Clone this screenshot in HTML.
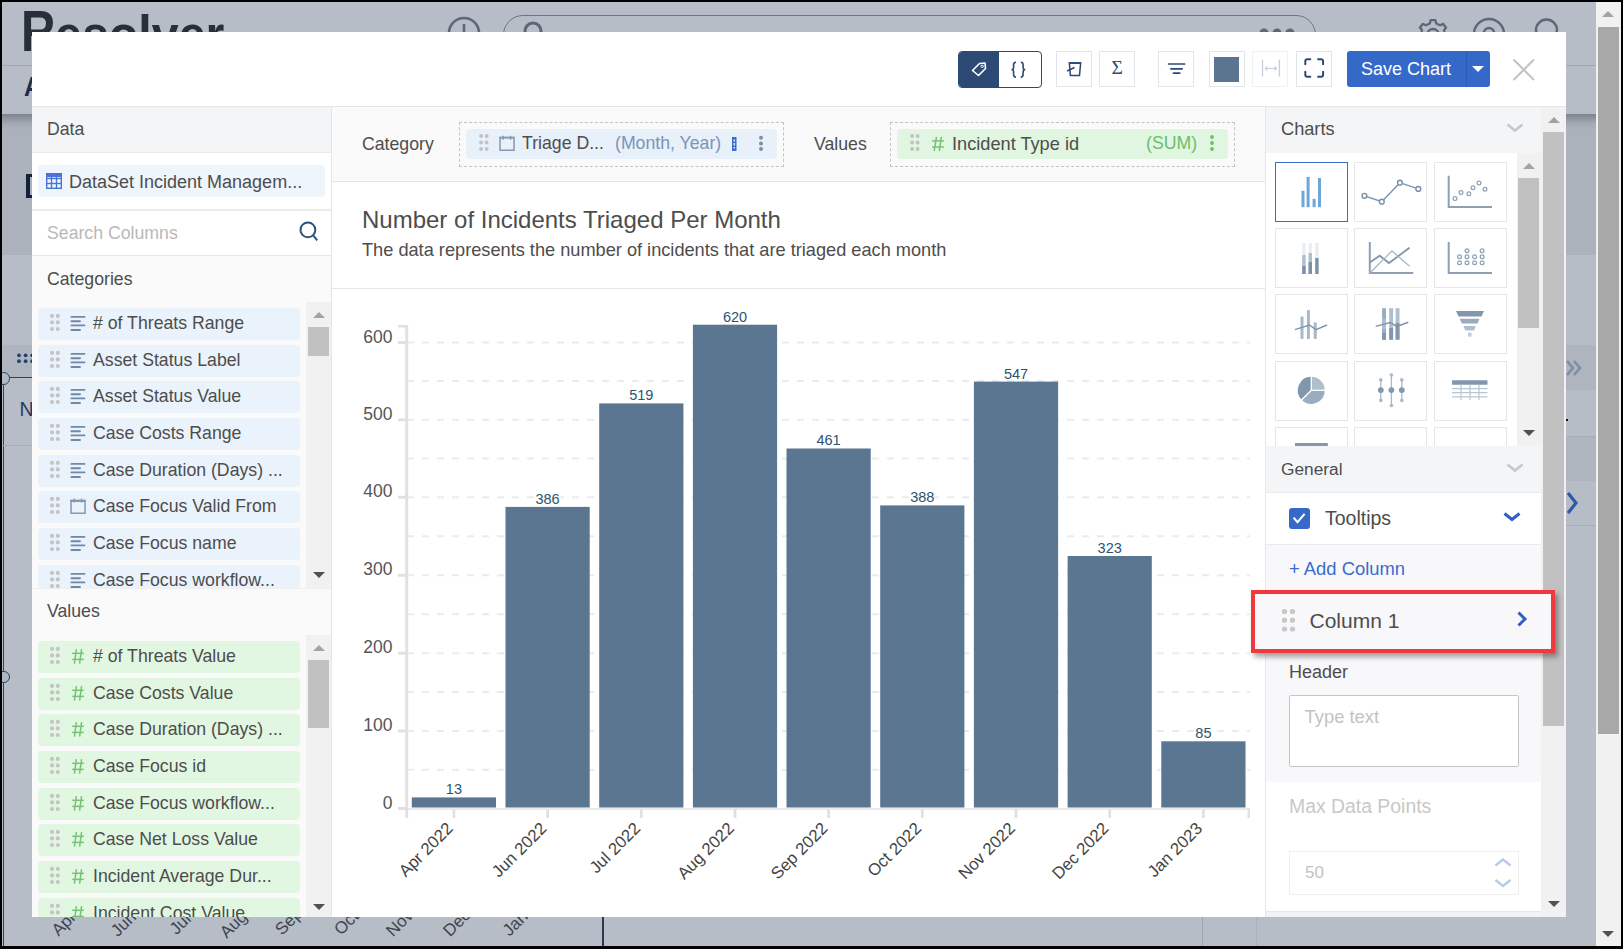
<!DOCTYPE html>
<html><head><meta charset="utf-8">
<style>
*{box-sizing:border-box;margin:0;padding:0}
html,body{width:1623px;height:949px;overflow:hidden;background:#b7bdc7;font-family:"Liberation Sans",sans-serif;position:relative}
.a{position:absolute}
.t{position:absolute;white-space:nowrap;line-height:1}
#modal{position:absolute;left:32px;top:32px;width:1534px;height:885px;background:#fff;overflow:hidden}
.sb{position:absolute;background:#f1f1f1}
.sbt{position:absolute;background:#c1c1c1}
.aru{position:absolute;width:0;height:0;border-left:6px solid transparent;border-right:6px solid transparent;border-bottom:6px solid #a3a3a3}
.ard{position:absolute;width:0;height:0;border-left:6px solid transparent;border-right:6px solid transparent;border-top:6px solid #505050}
</style></head>
<body>
<!-- background page -->
<div class="a" style="left:0;top:0;width:1623px;height:66px;background:#b7bdc7;border-bottom:1px solid #9ea6b1"></div>
<div class="t" style="left:20.5px;top:4px;font-size:56.7px;font-weight:bold;color:#282f39;transform:scaleX(0.845);transform-origin:0 0">R</div><div class="t" style="left:55px;top:8px;font-size:52px;font-weight:bold;color:#282f39;transform:scaleX(0.93);transform-origin:0 0">esolver</div>
<svg class="a" style="left:440px;top:10px" width="50" height="50"><circle cx="24" cy="23" r="15" fill="none" stroke="#5b6877" stroke-width="2.6"/><line x1="24" y1="14" x2="24" y2="24" stroke="#5b6877" stroke-width="2.6"/></svg>
<div class="a" style="left:503px;top:15px;width:813px;height:40px;border:1.2px solid #6b7684;border-radius:20px"></div>
<svg class="a" style="left:515px;top:14px" width="40" height="30"><circle cx="18" cy="17" r="8" fill="none" stroke="#5b6877" stroke-width="3.2"/></svg>
<svg class="a" style="left:1255px;top:22px" width="45" height="14"><circle cx="9" cy="11" r="4.5" fill="#5b6877"/><circle cx="22" cy="11" r="4.5" fill="#5b6877"/><circle cx="35" cy="11" r="4.5" fill="#5b6877"/></svg>
<svg class="a" style="left:1412px;top:12px" width="44" height="44"><path d="M17.81 11.43 L18.72 8.17 L23.28 8.17 L24.19 11.43 L28.05 13.29 L31.17 11.97 L34.01 15.54 L32.03 18.28 L32.99 22.46 L35.96 24.08 L34.95 28.52 L31.57 28.69 L28.90 32.04 L29.49 35.37 L25.38 37.35 L23.14 34.81 L18.86 34.81 L16.62 37.35 L12.51 35.37 L13.10 32.04 L10.43 28.69 L7.05 28.52 L6.04 24.08 L9.01 22.46 L9.97 18.28 L7.99 15.54 L10.83 11.97 L13.95 13.29 Z" fill="none" stroke="#5b6877" stroke-width="2.3" stroke-linejoin="miter"/><circle cx="21" cy="23" r="6" fill="none" stroke="#5b6877" stroke-width="2.3"/></svg>
<svg class="a" style="left:1468px;top:12px" width="44" height="44"><circle cx="21" cy="22" r="15" fill="none" stroke="#5b6877" stroke-width="2.4"/><path d="M16 21a5 5 0 1 1 10 0" fill="none" stroke="#5b6877" stroke-width="2.4"/></svg>
<svg class="a" style="left:1530px;top:12px" width="36" height="36"><circle cx="16.5" cy="18" r="10.5" fill="none" stroke="#5b6877" stroke-width="2.4"/></svg>
<div class="t" style="left:23.5px;top:74px;font-size:27px;font-weight:bold;color:#1d2c44;transform:scaleX(0.9);transform-origin:0 0;-webkit-text-stroke:0px">A</div>
<div class="a" style="left:0;top:114px;width:1623px;height:141px;background:#abb2bc"></div>
<div class="a" style="left:0;top:114px;width:1623px;height:16px;background:linear-gradient(#7c848e,#a3aab4 60%,#abb2bc)"></div>
<div class="a" style="left:25.5px;top:174px;width:8px;height:23.5px;border:3px solid #13223a;border-left-width:4px;border-right:none"></div>
<div class="a" style="left:0;top:345px;width:1623px;height:32px;background:#aeb5bf"></div>
<svg class="a" style="left:14px;top:350px" width="22" height="16"><g fill="#26406a"><circle cx="5" cy="5.3" r="1.9"/><circle cx="11.6" cy="5.3" r="1.9"/><circle cx="18.2" cy="5.3" r="1.9"/><circle cx="5" cy="11.2" r="1.9"/><circle cx="11.6" cy="11.2" r="1.9"/><circle cx="18.2" cy="11.2" r="1.9"/></g></svg>
<div class="a" style="left:5px;top:376.5px;width:30px;height:1.3px;background:#2b4366"></div>
<div class="a" style="left:2.5px;top:377px;width:1.3px;height:570px;background:#2b4366"></div>
<div class="a" style="left:-3px;top:372px;width:12.5px;height:12.5px;border-radius:50%;border:1.3px solid #2b4366;background:#afb7c2"></div>
<div class="a" style="left:-3px;top:670.5px;width:12.5px;height:12.5px;border-radius:50%;border:1.3px solid #2b4366;background:#afb7c2"></div>
<div class="t" style="left:19.5px;top:399.5px;font-size:19.5px;color:#1d3a5c">N</div>
<div class="a" style="left:0;top:445px;width:1623px;height:1px;background:#a6adb8"></div>
<!-- right side of background -->
<div class="a" style="left:1566px;top:345px;width:30px;height:45px;background:#aeb5bf"></div>
<div class="a" style="left:1566px;top:436px;width:30px;height:45px;background:#aeb5bf"></div>
<div class="a" style="left:1566px;top:436px;width:30px;height:1px;background:#a6adb8"></div>
<div class="a" style="left:1566px;top:525px;width:30px;height:1px;background:#a6adb8"></div>
<svg class="a" style="left:1565px;top:358px" width="20" height="20"><path d="M2 3l6 7-6 7M9 3l6 7-6 7" fill="none" stroke="#7d8ea6" stroke-width="2.6"/></svg>
<div class="a" style="left:1566px;top:419px;width:2px;height:2px;background:#111"></div>
<svg class="a" style="left:1564px;top:490px" width="16" height="26"><path d="M4 3l8 10-8 10" fill="none" stroke="#2f57ac" stroke-width="3.2"/></svg>
<!-- bottom labels bg -->
<div class="a" style="left:602px;top:915px;width:1.5px;height:32px;background:#2b3a50"></div>
<div class="a" style="left:1202.3px;top:917px;width:1.2px;height:30px;background:#9ea6b1"></div><div class="a" style="left:1256px;top:917px;width:1px;height:30px;background:#a9b0ba"></div>
<svg class="a" style="left:0;top:880px" width="700" height="69" viewBox="0 880 700 69"><text transform="translate(58.4,936.7) rotate(-45)" font-size="17" fill="#3d4552" font-family="Liberation Sans">Apr 2022</text><text transform="translate(117.7,937.5) rotate(-45)" font-size="17" fill="#3d4552" font-family="Liberation Sans">Jun 2022</text><text transform="translate(176.5,935.5) rotate(-45)" font-size="17" fill="#3d4552" font-family="Liberation Sans">Jul 2022</text><text transform="translate(226.7,939.1) rotate(-45)" font-size="17" fill="#3d4552" font-family="Liberation Sans">Aug 2022</text><text transform="translate(282.0,935.9) rotate(-45)" font-size="17" fill="#3d4552" font-family="Liberation Sans">Sep 2022</text><text transform="translate(341.0,936.0) rotate(-45)" font-size="17" fill="#3d4552" font-family="Liberation Sans">Oct 2022</text><text transform="translate(393.0,937.5) rotate(-45)" font-size="17" fill="#3d4552" font-family="Liberation Sans">Nov 2022</text><text transform="translate(450.0,937.5) rotate(-45)" font-size="17" fill="#3d4552" font-family="Liberation Sans">Dec 2022</text><text transform="translate(509.5,937.0) rotate(-45)" font-size="17" fill="#3d4552" font-family="Liberation Sans">Jan 2023</text></svg>
<!-- outer scrollbar -->
<div class="sb" style="left:1596px;top:0;width:25px;height:949px"></div>
<div class="a" style="left:1598px;top:27px;width:21px;height:707px;background:#a8a8a8"></div>
<div class="aru" style="left:1602px;top:11px;border-bottom-color:#a3a3a3"></div>
<div class="ard" style="left:1602px;top:931px"></div>


<!-- modal -->
<div id="modal"></div>
<div class="a" style="left:32px;top:106px;width:1534px;height:1px;background:#e4e6e9"></div>
<!-- left panel -->
<div id="lp" class="a" style="left:32px;top:107px;width:299px;height:810px;background:#fafafa;overflow:hidden">
  <div class="a" style="left:0;top:0;width:299px;height:46px;background:#f4f5f7;border-bottom:1px solid #e8e9eb"></div>
  <div class="t" style="left:15px;top:14px;font-size:17.7px;color:#4d4d4d">Data</div>
  <div class="a" style="left:0;top:46px;width:299px;height:56px;background:#fff"></div>
  <div class="a" style="left:6px;top:58px;width:287px;height:32px;background:#eff5fc;border-radius:4px"></div>
  <svg class="a" style="left:14px;top:66px" width="16" height="16"><g fill="none" stroke="#4a73d6" stroke-width="1.4"><rect x="0.7" y="0.7" width="14.6" height="14.6"/><line x1="0" y1="5.5" x2="16" y2="5.5"/><line x1="0" y1="10.5" x2="16" y2="10.5"/><line x1="5.5" y1="3" x2="5.5" y2="16"/><line x1="10.5" y1="3" x2="10.5" y2="16"/></g><rect x="0" y="0" width="16" height="4" fill="#4a73d6"/></svg>
  <div class="t" style="left:37px;top:66px;font-size:18px;color:#4d4d4d">DataSet Incident Managem...</div>
  <div class="a" style="left:0;top:102px;width:299px;height:2px;background:#ebebeb"></div>
  <div class="a" style="left:0;top:104px;width:299px;height:45px;background:#fff;border-bottom:1px solid #e6e6e6"></div>
  <div class="t" style="left:15px;top:118px;font-size:17.7px;color:#b9b9b9">Search Columns</div>
  <svg class="a" style="left:266px;top:114px" width="22" height="22"><circle cx="9.9" cy="8.9" r="7.4" fill="none" stroke="#2d4f7f" stroke-width="2"/><line x1="15" y1="14.2" x2="19.2" y2="19.4" stroke="#2d4f7f" stroke-width="2"/></svg>
  <div class="t" style="left:15px;top:164px;font-size:17.7px;color:#4d4d4d">Categories</div>
  <div id="catlist" class="a" style="left:0;top:195px;width:299px;height:286px;overflow:hidden"><div class="a" style="left:6px;top:6.00px;width:262px;height:32px;background:#eaf2fb;border-radius:4px"><svg class="a" style="left:11px;top:5px" width="14" height="20"><g fill="#c4c4c4"><circle cx="3.05" cy="2.9" r="2.05"/><circle cx="8.8" cy="2.9" r="2.05"/><circle cx="3.05" cy="9.4" r="2.05"/><circle cx="8.8" cy="9.4" r="2.05"/><circle cx="3.05" cy="16" r="2.05"/><circle cx="8.8" cy="16" r="2.05"/></g></svg><svg class="a" style="left:31px;top:7px" width="18" height="17"><g stroke="#7189a8" stroke-width="1.9" stroke-linecap="round"><line x1="2.4" y1="1.9" x2="15.4" y2="1.9"/><line x1="2.4" y1="6.2" x2="11" y2="6.2"/><line x1="2.4" y1="10.4" x2="15.4" y2="10.4"/><line x1="2.4" y1="15" x2="11" y2="15"/></g></svg><div class="t" style="left:55px;top:7px;font-size:17.7px;color:#4d4d4d"># of Threats Range</div></div><div class="a" style="left:6px;top:42.67px;width:262px;height:32px;background:#eaf2fb;border-radius:4px"><svg class="a" style="left:11px;top:5px" width="14" height="20"><g fill="#c4c4c4"><circle cx="3.05" cy="2.9" r="2.05"/><circle cx="8.8" cy="2.9" r="2.05"/><circle cx="3.05" cy="9.4" r="2.05"/><circle cx="8.8" cy="9.4" r="2.05"/><circle cx="3.05" cy="16" r="2.05"/><circle cx="8.8" cy="16" r="2.05"/></g></svg><svg class="a" style="left:31px;top:7px" width="18" height="17"><g stroke="#7189a8" stroke-width="1.9" stroke-linecap="round"><line x1="2.4" y1="1.9" x2="15.4" y2="1.9"/><line x1="2.4" y1="6.2" x2="11" y2="6.2"/><line x1="2.4" y1="10.4" x2="15.4" y2="10.4"/><line x1="2.4" y1="15" x2="11" y2="15"/></g></svg><div class="t" style="left:55px;top:7px;font-size:17.7px;color:#4d4d4d">Asset Status Label</div></div><div class="a" style="left:6px;top:79.34px;width:262px;height:32px;background:#eaf2fb;border-radius:4px"><svg class="a" style="left:11px;top:5px" width="14" height="20"><g fill="#c4c4c4"><circle cx="3.05" cy="2.9" r="2.05"/><circle cx="8.8" cy="2.9" r="2.05"/><circle cx="3.05" cy="9.4" r="2.05"/><circle cx="8.8" cy="9.4" r="2.05"/><circle cx="3.05" cy="16" r="2.05"/><circle cx="8.8" cy="16" r="2.05"/></g></svg><svg class="a" style="left:31px;top:7px" width="18" height="17"><g stroke="#7189a8" stroke-width="1.9" stroke-linecap="round"><line x1="2.4" y1="1.9" x2="15.4" y2="1.9"/><line x1="2.4" y1="6.2" x2="11" y2="6.2"/><line x1="2.4" y1="10.4" x2="15.4" y2="10.4"/><line x1="2.4" y1="15" x2="11" y2="15"/></g></svg><div class="t" style="left:55px;top:7px;font-size:17.7px;color:#4d4d4d">Asset Status Value</div></div><div class="a" style="left:6px;top:116.01px;width:262px;height:32px;background:#eaf2fb;border-radius:4px"><svg class="a" style="left:11px;top:5px" width="14" height="20"><g fill="#c4c4c4"><circle cx="3.05" cy="2.9" r="2.05"/><circle cx="8.8" cy="2.9" r="2.05"/><circle cx="3.05" cy="9.4" r="2.05"/><circle cx="8.8" cy="9.4" r="2.05"/><circle cx="3.05" cy="16" r="2.05"/><circle cx="8.8" cy="16" r="2.05"/></g></svg><svg class="a" style="left:31px;top:7px" width="18" height="17"><g stroke="#7189a8" stroke-width="1.9" stroke-linecap="round"><line x1="2.4" y1="1.9" x2="15.4" y2="1.9"/><line x1="2.4" y1="6.2" x2="11" y2="6.2"/><line x1="2.4" y1="10.4" x2="15.4" y2="10.4"/><line x1="2.4" y1="15" x2="11" y2="15"/></g></svg><div class="t" style="left:55px;top:7px;font-size:17.7px;color:#4d4d4d">Case Costs Range</div></div><div class="a" style="left:6px;top:152.68px;width:262px;height:32px;background:#eaf2fb;border-radius:4px"><svg class="a" style="left:11px;top:5px" width="14" height="20"><g fill="#c4c4c4"><circle cx="3.05" cy="2.9" r="2.05"/><circle cx="8.8" cy="2.9" r="2.05"/><circle cx="3.05" cy="9.4" r="2.05"/><circle cx="8.8" cy="9.4" r="2.05"/><circle cx="3.05" cy="16" r="2.05"/><circle cx="8.8" cy="16" r="2.05"/></g></svg><svg class="a" style="left:31px;top:7px" width="18" height="17"><g stroke="#7189a8" stroke-width="1.9" stroke-linecap="round"><line x1="2.4" y1="1.9" x2="15.4" y2="1.9"/><line x1="2.4" y1="6.2" x2="11" y2="6.2"/><line x1="2.4" y1="10.4" x2="15.4" y2="10.4"/><line x1="2.4" y1="15" x2="11" y2="15"/></g></svg><div class="t" style="left:55px;top:7px;font-size:17.7px;color:#4d4d4d">Case Duration (Days) ...</div></div><div class="a" style="left:6px;top:189.35px;width:262px;height:32px;background:#eaf2fb;border-radius:4px"><svg class="a" style="left:11px;top:5px" width="14" height="20"><g fill="#c4c4c4"><circle cx="3.05" cy="2.9" r="2.05"/><circle cx="8.8" cy="2.9" r="2.05"/><circle cx="3.05" cy="9.4" r="2.05"/><circle cx="8.8" cy="9.4" r="2.05"/><circle cx="3.05" cy="16" r="2.05"/><circle cx="8.8" cy="16" r="2.05"/></g></svg><svg class="a" style="left:31px;top:7px" width="18" height="18"><g fill="none" stroke="#8499b4" stroke-width="1.5"><rect x="2.05" y="2.55" width="14" height="12.7"/></g><rect x="1.3" y="1.8" width="15.5" height="2.2" fill="#8499b4"/><line x1="5.2" y1="0.5" x2="5.2" y2="4.5" stroke="#8499b4" stroke-width="1.4"/><line x1="12.6" y1="0.5" x2="12.6" y2="4.5" stroke="#8499b4" stroke-width="1.4"/></svg><div class="t" style="left:55px;top:7px;font-size:17.7px;color:#4d4d4d">Case Focus Valid From</div></div><div class="a" style="left:6px;top:226.02px;width:262px;height:32px;background:#eaf2fb;border-radius:4px"><svg class="a" style="left:11px;top:5px" width="14" height="20"><g fill="#c4c4c4"><circle cx="3.05" cy="2.9" r="2.05"/><circle cx="8.8" cy="2.9" r="2.05"/><circle cx="3.05" cy="9.4" r="2.05"/><circle cx="8.8" cy="9.4" r="2.05"/><circle cx="3.05" cy="16" r="2.05"/><circle cx="8.8" cy="16" r="2.05"/></g></svg><svg class="a" style="left:31px;top:7px" width="18" height="17"><g stroke="#7189a8" stroke-width="1.9" stroke-linecap="round"><line x1="2.4" y1="1.9" x2="15.4" y2="1.9"/><line x1="2.4" y1="6.2" x2="11" y2="6.2"/><line x1="2.4" y1="10.4" x2="15.4" y2="10.4"/><line x1="2.4" y1="15" x2="11" y2="15"/></g></svg><div class="t" style="left:55px;top:7px;font-size:17.7px;color:#4d4d4d">Case Focus name</div></div><div class="a" style="left:6px;top:262.69px;width:262px;height:32px;background:#eaf2fb;border-radius:4px"><svg class="a" style="left:11px;top:5px" width="14" height="20"><g fill="#c4c4c4"><circle cx="3.05" cy="2.9" r="2.05"/><circle cx="8.8" cy="2.9" r="2.05"/><circle cx="3.05" cy="9.4" r="2.05"/><circle cx="8.8" cy="9.4" r="2.05"/><circle cx="3.05" cy="16" r="2.05"/><circle cx="8.8" cy="16" r="2.05"/></g></svg><svg class="a" style="left:31px;top:7px" width="18" height="17"><g stroke="#7189a8" stroke-width="1.9" stroke-linecap="round"><line x1="2.4" y1="1.9" x2="15.4" y2="1.9"/><line x1="2.4" y1="6.2" x2="11" y2="6.2"/><line x1="2.4" y1="10.4" x2="15.4" y2="10.4"/><line x1="2.4" y1="15" x2="11" y2="15"/></g></svg><div class="t" style="left:55px;top:7px;font-size:17.7px;color:#4d4d4d">Case Focus workflow...</div></div></div>
  <div class="sb" style="left:274px;top:195px;width:25px;height:286px"></div>
  <div class="sbt" style="left:276px;top:220px;width:21px;height:29px"></div>
  <div class="aru" style="left:280.5px;top:205px"></div>
  <div class="ard" style="left:280.5px;top:465px"></div>
  <div class="a" style="left:0;top:481px;width:299px;height:1px;background:#efefef"></div>
  <div class="t" style="left:15px;top:496px;font-size:17.7px;color:#4d4d4d">Values</div>
  <div id="vallist" class="a" style="left:0;top:528px;width:299px;height:282px;overflow:hidden"><div class="a" style="left:6px;top:6.00px;width:262px;height:32px;background:#e2f7e2;border-radius:4px"><svg class="a" style="left:11px;top:5px" width="14" height="20"><g fill="#c4c4c4"><circle cx="3.05" cy="2.9" r="2.05"/><circle cx="8.8" cy="2.9" r="2.05"/><circle cx="3.05" cy="9.4" r="2.05"/><circle cx="8.8" cy="9.4" r="2.05"/><circle cx="3.05" cy="16" r="2.05"/><circle cx="8.8" cy="16" r="2.05"/></g></svg><svg class="a" style="left:33px;top:7px" width="14" height="17"><g stroke="#76c276" stroke-width="1.5" fill="none"><line x1="5.4" y1="1.2" x2="3.4" y2="15.7"/><line x1="10.6" y1="1.2" x2="8.6" y2="15.7"/><line x1="1.2" y1="5.3" x2="12.8" y2="5.3"/><line x1="1.2" y1="11.4" x2="12.8" y2="11.4"/></g></svg><div class="t" style="left:55px;top:7px;font-size:17.7px;color:#4d4d4d"># of Threats Value</div></div><div class="a" style="left:6px;top:42.67px;width:262px;height:32px;background:#e2f7e2;border-radius:4px"><svg class="a" style="left:11px;top:5px" width="14" height="20"><g fill="#c4c4c4"><circle cx="3.05" cy="2.9" r="2.05"/><circle cx="8.8" cy="2.9" r="2.05"/><circle cx="3.05" cy="9.4" r="2.05"/><circle cx="8.8" cy="9.4" r="2.05"/><circle cx="3.05" cy="16" r="2.05"/><circle cx="8.8" cy="16" r="2.05"/></g></svg><svg class="a" style="left:33px;top:7px" width="14" height="17"><g stroke="#76c276" stroke-width="1.5" fill="none"><line x1="5.4" y1="1.2" x2="3.4" y2="15.7"/><line x1="10.6" y1="1.2" x2="8.6" y2="15.7"/><line x1="1.2" y1="5.3" x2="12.8" y2="5.3"/><line x1="1.2" y1="11.4" x2="12.8" y2="11.4"/></g></svg><div class="t" style="left:55px;top:7px;font-size:17.7px;color:#4d4d4d">Case Costs Value</div></div><div class="a" style="left:6px;top:79.34px;width:262px;height:32px;background:#e2f7e2;border-radius:4px"><svg class="a" style="left:11px;top:5px" width="14" height="20"><g fill="#c4c4c4"><circle cx="3.05" cy="2.9" r="2.05"/><circle cx="8.8" cy="2.9" r="2.05"/><circle cx="3.05" cy="9.4" r="2.05"/><circle cx="8.8" cy="9.4" r="2.05"/><circle cx="3.05" cy="16" r="2.05"/><circle cx="8.8" cy="16" r="2.05"/></g></svg><svg class="a" style="left:33px;top:7px" width="14" height="17"><g stroke="#76c276" stroke-width="1.5" fill="none"><line x1="5.4" y1="1.2" x2="3.4" y2="15.7"/><line x1="10.6" y1="1.2" x2="8.6" y2="15.7"/><line x1="1.2" y1="5.3" x2="12.8" y2="5.3"/><line x1="1.2" y1="11.4" x2="12.8" y2="11.4"/></g></svg><div class="t" style="left:55px;top:7px;font-size:17.7px;color:#4d4d4d">Case Duration (Days) ...</div></div><div class="a" style="left:6px;top:116.01px;width:262px;height:32px;background:#e2f7e2;border-radius:4px"><svg class="a" style="left:11px;top:5px" width="14" height="20"><g fill="#c4c4c4"><circle cx="3.05" cy="2.9" r="2.05"/><circle cx="8.8" cy="2.9" r="2.05"/><circle cx="3.05" cy="9.4" r="2.05"/><circle cx="8.8" cy="9.4" r="2.05"/><circle cx="3.05" cy="16" r="2.05"/><circle cx="8.8" cy="16" r="2.05"/></g></svg><svg class="a" style="left:33px;top:7px" width="14" height="17"><g stroke="#76c276" stroke-width="1.5" fill="none"><line x1="5.4" y1="1.2" x2="3.4" y2="15.7"/><line x1="10.6" y1="1.2" x2="8.6" y2="15.7"/><line x1="1.2" y1="5.3" x2="12.8" y2="5.3"/><line x1="1.2" y1="11.4" x2="12.8" y2="11.4"/></g></svg><div class="t" style="left:55px;top:7px;font-size:17.7px;color:#4d4d4d">Case Focus id</div></div><div class="a" style="left:6px;top:152.68px;width:262px;height:32px;background:#e2f7e2;border-radius:4px"><svg class="a" style="left:11px;top:5px" width="14" height="20"><g fill="#c4c4c4"><circle cx="3.05" cy="2.9" r="2.05"/><circle cx="8.8" cy="2.9" r="2.05"/><circle cx="3.05" cy="9.4" r="2.05"/><circle cx="8.8" cy="9.4" r="2.05"/><circle cx="3.05" cy="16" r="2.05"/><circle cx="8.8" cy="16" r="2.05"/></g></svg><svg class="a" style="left:33px;top:7px" width="14" height="17"><g stroke="#76c276" stroke-width="1.5" fill="none"><line x1="5.4" y1="1.2" x2="3.4" y2="15.7"/><line x1="10.6" y1="1.2" x2="8.6" y2="15.7"/><line x1="1.2" y1="5.3" x2="12.8" y2="5.3"/><line x1="1.2" y1="11.4" x2="12.8" y2="11.4"/></g></svg><div class="t" style="left:55px;top:7px;font-size:17.7px;color:#4d4d4d">Case Focus workflow...</div></div><div class="a" style="left:6px;top:189.35px;width:262px;height:32px;background:#e2f7e2;border-radius:4px"><svg class="a" style="left:11px;top:5px" width="14" height="20"><g fill="#c4c4c4"><circle cx="3.05" cy="2.9" r="2.05"/><circle cx="8.8" cy="2.9" r="2.05"/><circle cx="3.05" cy="9.4" r="2.05"/><circle cx="8.8" cy="9.4" r="2.05"/><circle cx="3.05" cy="16" r="2.05"/><circle cx="8.8" cy="16" r="2.05"/></g></svg><svg class="a" style="left:33px;top:7px" width="14" height="17"><g stroke="#76c276" stroke-width="1.5" fill="none"><line x1="5.4" y1="1.2" x2="3.4" y2="15.7"/><line x1="10.6" y1="1.2" x2="8.6" y2="15.7"/><line x1="1.2" y1="5.3" x2="12.8" y2="5.3"/><line x1="1.2" y1="11.4" x2="12.8" y2="11.4"/></g></svg><div class="t" style="left:55px;top:7px;font-size:17.7px;color:#4d4d4d">Case Net Loss Value</div></div><div class="a" style="left:6px;top:226.02px;width:262px;height:32px;background:#e2f7e2;border-radius:4px"><svg class="a" style="left:11px;top:5px" width="14" height="20"><g fill="#c4c4c4"><circle cx="3.05" cy="2.9" r="2.05"/><circle cx="8.8" cy="2.9" r="2.05"/><circle cx="3.05" cy="9.4" r="2.05"/><circle cx="8.8" cy="9.4" r="2.05"/><circle cx="3.05" cy="16" r="2.05"/><circle cx="8.8" cy="16" r="2.05"/></g></svg><svg class="a" style="left:33px;top:7px" width="14" height="17"><g stroke="#76c276" stroke-width="1.5" fill="none"><line x1="5.4" y1="1.2" x2="3.4" y2="15.7"/><line x1="10.6" y1="1.2" x2="8.6" y2="15.7"/><line x1="1.2" y1="5.3" x2="12.8" y2="5.3"/><line x1="1.2" y1="11.4" x2="12.8" y2="11.4"/></g></svg><div class="t" style="left:55px;top:7px;font-size:17.7px;color:#4d4d4d">Incident Average Dur...</div></div><div class="a" style="left:6px;top:262.69px;width:262px;height:32px;background:#e2f7e2;border-radius:4px"><svg class="a" style="left:11px;top:5px" width="14" height="20"><g fill="#c4c4c4"><circle cx="3.05" cy="2.9" r="2.05"/><circle cx="8.8" cy="2.9" r="2.05"/><circle cx="3.05" cy="9.4" r="2.05"/><circle cx="8.8" cy="9.4" r="2.05"/><circle cx="3.05" cy="16" r="2.05"/><circle cx="8.8" cy="16" r="2.05"/></g></svg><svg class="a" style="left:33px;top:7px" width="14" height="17"><g stroke="#76c276" stroke-width="1.5" fill="none"><line x1="5.4" y1="1.2" x2="3.4" y2="15.7"/><line x1="10.6" y1="1.2" x2="8.6" y2="15.7"/><line x1="1.2" y1="5.3" x2="12.8" y2="5.3"/><line x1="1.2" y1="11.4" x2="12.8" y2="11.4"/></g></svg><div class="t" style="left:55px;top:7px;font-size:17.7px;color:#4d4d4d">Incident Cost Value</div></div></div>
  <div class="sb" style="left:274px;top:528px;width:25px;height:282px"></div>
  <div class="sbt" style="left:276px;top:553px;width:21px;height:68px"></div>
  <div class="aru" style="left:280.5px;top:538px"></div>
  <div class="ard" style="left:280.5px;top:797px"></div>
</div>
<div class="a" style="left:331px;top:107px;width:1px;height:810px;background:#e6e6e6"></div>

<!-- header toolbar -->
<div class="a" style="left:958px;top:51px;width:84px;height:37px;border:1.5px solid #2c4a74;border-radius:4px;overflow:hidden;background:#fff">
  <div class="a" style="left:0;top:0;width:40px;height:37px;background:#2c4a74"></div>
</div>
<svg class="a" style="left:969px;top:60px" width="20" height="20"><path d="M3.5 10.5 L10.5 3.5 L16 3 L16.5 8.5 L9.5 15.5 Z" fill="none" stroke="#fff" stroke-width="1.6" stroke-linejoin="round"/><circle cx="13.2" cy="6.3" r="1.2" fill="none" stroke="#fff" stroke-width="1"/></svg>
<svg class="a" style="left:1008px;top:60px" width="20" height="20"><g fill="none" stroke="#2c4a74" stroke-width="1.6"><path d="M8 2.2C6.3 2.2 5.6 3 5.6 4.8L5.6 7.6C5.6 9 4.9 9.7 3.5 9.7C4.9 9.7 5.6 10.4 5.6 11.8L5.6 14.6C5.6 16.4 6.3 17.2 8 17.2"/><path d="M12.7 2.2C14.4 2.2 15.1 3 15.1 4.8L15.1 7.6C15.1 9 15.8 9.7 17.2 9.7C15.8 9.7 15.1 10.4 15.1 11.8L15.1 14.6C15.1 16.4 14.4 17.2 12.7 17.2"/></g></svg>
<div class="a" style="left:1056px;top:51px;width:36px;height:36px;border:1px solid #e1e6ed"></div>
<svg class="a" style="left:1063px;top:58px" width="22" height="22"><path d="M6.4 5.3 L17.6 5.3 L16.5 17.4 L7.4 17.4 Z" fill="none" stroke="#2c4a74" stroke-width="1.5"/><line x1="5.6" y1="4.6" x2="18.4" y2="4.6" stroke="#2c4a74" stroke-width="1"/><path d="M4.1 13 L11.5 9.5" fill="none" stroke="#2c4a74" stroke-width="1.5"/></svg>
<div class="a" style="left:1099px;top:51px;width:36px;height:36px;border:1px solid #e1e6ed"></div>
<div class="t" style="left:1111.5px;top:58px;font-size:19.5px;color:#2c4a74;font-family:'Liberation Serif',serif">&Sigma;</div>
<div class="a" style="left:1158px;top:51px;width:36px;height:36px;border:1px solid #e1e6ed"></div>
<svg class="a" style="left:1165px;top:58px" width="22" height="22"><g stroke="#2c4a74" stroke-width="1.7" stroke-linecap="round"><line x1="3.6" y1="6" x2="19.6" y2="6"/><line x1="5.9" y1="10.8" x2="17.2" y2="10.8"/><line x1="8.4" y1="15.1" x2="14.8" y2="15.1"/></g></svg>
<div class="a" style="left:1209px;top:51px;width:36px;height:36px;border:1px solid #e1e6ed"></div>
<div class="a" style="left:1214px;top:57px;width:25px;height:25px;background:#5b7590"></div>
<div class="a" style="left:1252px;top:51px;width:36px;height:36px;border:1px solid #eef1f5"></div>
<svg class="a" style="left:1259px;top:58px" width="24" height="22"><g stroke="#c5cfdb" stroke-width="1.3" fill="none"><line x1="3.5" y1="1.6" x2="3.5" y2="18.6"/><line x1="20.4" y1="1.6" x2="20.4" y2="18.6"/><line x1="6.3" y1="10.4" x2="17.6" y2="10.4" stroke-width="1.1"/><path d="M8.3 8.3l-2 2.1 2 2.1M15.6 8.3l2 2.1-2 2.1" stroke-width="1.1"/></g></svg>
<div class="a" style="left:1296px;top:51px;width:36px;height:36px;border:1px solid #e1e6ed"></div>
<svg class="a" style="left:1303px;top:57px" width="23" height="23"><g stroke="#2c4a74" stroke-width="2" fill="none" stroke-linecap="round"><path d="M2.3 7.3V4.2a2 2 0 0 1 2-2h3M15.1 2.2h3a2 2 0 0 1 2 2v3.1M20.1 14.7v3.1a2 2 0 0 1-2 2h-3M7.3 19.8h-3a2 2 0 0 1-2-2v-3.1"/></g></svg>
<div class="a" style="left:1347px;top:51px;width:143px;height:36px;background:#3569c9;border-radius:3px"></div>
<div class="a" style="left:1466px;top:51px;width:1px;height:36px;background:#2d5bb0"></div>
<div class="t" style="left:1361px;top:60px;font-size:18px;color:#fff">Save Chart</div>
<div class="a" style="left:1472px;top:66px;width:0;height:0;border-left:6px solid transparent;border-right:6px solid transparent;border-top:6px solid #fff"></div>
<svg class="a" style="left:1511px;top:57px" width="26" height="26"><g stroke="#c3c3c3" stroke-width="2.2"><line x1="2.5" y1="2.5" x2="23" y2="23"/><line x1="23" y1="2.5" x2="2.5" y2="23"/></g></svg>

<!-- center panel -->
<div class="a" style="left:332px;top:107px;width:933px;height:75px;background:#fafafa;border-bottom:1px solid #e6e6e6"></div>
<div class="t" style="left:362px;top:136px;font-size:17.7px;color:#4d4d4d">Category</div>
<div class="a" style="left:459px;top:122px;width:325px;height:45px;border:1px dashed #c4c4c4"></div>
<div class="a" style="left:466px;top:129px;width:311px;height:30px;background:#e8f0fa;border-radius:4px"></div>
<svg class="a" style="left:477px;top:134px" width="14" height="18"><g fill="#c2c2c2"><circle cx="4.1" cy="2" r="1.95"/><circle cx="9.6" cy="2" r="1.95"/><circle cx="4.1" cy="8.5" r="1.95"/><circle cx="9.6" cy="8.5" r="1.95"/><circle cx="4.1" cy="15" r="1.95"/><circle cx="9.6" cy="15" r="1.95"/></g></svg>
<svg class="a" style="left:498px;top:135.1px" width="18" height="18"><g fill="none" stroke="#8499b4" stroke-width="1.5"><rect x="2.05" y="2.55" width="14" height="12.7"/></g><rect x="1.3" y="1.8" width="15.5" height="1.6" fill="#8499b4"/><line x1="5.3" y1="0.8" x2="5.3" y2="4.8" stroke="#8499b4" stroke-width="1.4"/><line x1="12.6" y1="0.8" x2="12.6" y2="4.8" stroke="#8499b4" stroke-width="1.4"/></svg>
<div class="t" style="left:522px;top:135px;font-size:17.7px;color:#4d4d4d">Triage D...</div>
<div class="t" style="left:615px;top:135px;font-size:17.7px;color:#7b94b9">(Month, Year)</div>
<svg class="a" style="left:731.5px;top:137px" width="5" height="14"><rect x="0" y="0" width="4.5" height="14" fill="#3a6bd0"/><g fill="#dfe8f8"><rect x="1.5" y="2.5" width="1.5" height="2"/><rect x="1.5" y="6" width="1.5" height="2.5"/><rect x="1.5" y="10" width="1.5" height="1.5"/></g></svg>
<svg class="a" style="left:756.5px;top:134px" width="8" height="18"><g fill="#7b8fa8"><circle cx="4" cy="3.8" r="2"/><circle cx="4" cy="9.5" r="2"/><circle cx="4" cy="15" r="2"/></g></svg>
<div class="t" style="left:814px;top:136px;font-size:17.7px;color:#4d4d4d">Values</div>
<div class="a" style="left:890px;top:122px;width:345px;height:45px;border:1px dashed #c4c4c4"></div>
<div class="a" style="left:897px;top:129px;width:331px;height:30px;background:#e0f6e0;border-radius:4px"></div>
<svg class="a" style="left:908px;top:134px" width="14" height="18"><g fill="#c2c2c2"><circle cx="4.1" cy="2" r="1.95"/><circle cx="9.6" cy="2" r="1.95"/><circle cx="4.1" cy="8.5" r="1.95"/><circle cx="9.6" cy="8.5" r="1.95"/><circle cx="4.1" cy="15" r="1.95"/><circle cx="9.6" cy="15" r="1.95"/></g></svg>
<svg class="a" style="left:931px;top:134.5px" width="14" height="17"><g stroke="#76c276" stroke-width="1.5" fill="none"><line x1="5.5" y1="1.9" x2="3.2" y2="16"/><line x1="10.4" y1="1.9" x2="8.3" y2="16"/><line x1="1.1" y1="5.9" x2="12.9" y2="5.9"/><line x1="1.1" y1="12" x2="12.9" y2="12"/></g></svg>
<div class="t" style="left:952px;top:135px;font-size:18.2px;color:#4d4d4d">Incident Type id</div>
<div class="t" style="left:1146px;top:135px;font-size:17.7px;color:#6cbf6c">(SUM)</div>
<svg class="a" style="left:1208px;top:134px" width="8" height="18"><g fill="#6cbf6c"><circle cx="4" cy="3" r="1.9"/><circle cx="4" cy="9" r="1.9"/><circle cx="4" cy="15" r="1.9"/></g></svg>
<div class="t" style="left:362px;top:208px;font-size:24px;color:#4d4d4d">Number of Incidents Triaged Per Month</div>
<div class="t" style="left:362px;top:241px;font-size:18.2px;color:#4d4d4d">The data represents the number of incidents that are triaged each month</div>
<div class="a" style="left:332px;top:288px;width:933px;height:1px;background:#e6e6e6"></div>
<div class="a" style="left:1265px;top:107px;width:1px;height:810px;background:#e6e6e6"></div>

<!-- right panel -->
<div class="a" style="left:1266px;top:107px;width:275px;height:339px;background:#fff;overflow:hidden"></div>
<div class="a" style="left:1266px;top:107px;width:275px;height:46px;background:#f4f5f7"></div>
<div class="t" style="left:1281px;top:120px;font-size:18.2px;color:#4d4d4d">Charts</div>
<svg class="a" style="left:1505px;top:122px" width="20" height="12"><path d="M2.5 2.5l7.5 6 7.5-6" fill="none" stroke="#c8c8c8" stroke-width="2.6"/></svg>
<div class="a" style="left:1275px;top:162px;width:73px;height:60px;border:1.6px solid #3a6bd1;background:#fff"></div><div class="a" style="left:1354.3px;top:162px;width:73px;height:60px;border:1px solid #e6e6e6;background:#fff"></div><div class="a" style="left:1434.4px;top:162px;width:73px;height:60px;border:1px solid #e6e6e6;background:#fff"></div><div class="a" style="left:1275px;top:228.3px;width:73px;height:60px;border:1px solid #e6e6e6;background:#fff"></div><div class="a" style="left:1354.3px;top:228.3px;width:73px;height:60px;border:1px solid #e6e6e6;background:#fff"></div><div class="a" style="left:1434.4px;top:228.3px;width:73px;height:60px;border:1px solid #e6e6e6;background:#fff"></div><div class="a" style="left:1275px;top:294.3px;width:73px;height:60px;border:1px solid #e6e6e6;background:#fff"></div><div class="a" style="left:1354.3px;top:294.3px;width:73px;height:60px;border:1px solid #e6e6e6;background:#fff"></div><div class="a" style="left:1434.4px;top:294.3px;width:73px;height:60px;border:1px solid #e6e6e6;background:#fff"></div><div class="a" style="left:1275px;top:360.5px;width:73px;height:60px;border:1px solid #e6e6e6;background:#fff"></div><div class="a" style="left:1354.3px;top:360.5px;width:73px;height:60px;border:1px solid #e6e6e6;background:#fff"></div><div class="a" style="left:1434.4px;top:360.5px;width:73px;height:60px;border:1px solid #e6e6e6;background:#fff"></div><div class="a" style="left:1275px;top:426.5px;width:73px;height:60px;border:1px solid #e6e6e6;background:#fff"></div><div class="a" style="left:1354.3px;top:426.5px;width:73px;height:60px;border:1px solid #e6e6e6;background:#fff"></div><div class="a" style="left:1434.4px;top:426.5px;width:73px;height:60px;border:1px solid #e6e6e6;background:#fff"></div>
<svg class="a" style="left:1265px;top:153px" width="252" height="293" viewBox="1265 153 252 293">
<g fill="#6ea6d6"><rect x="1301.5" y="190.7" width="3" height="16.5"/><rect x="1306.6" y="176.9" width="3" height="30.3"/><rect x="1312.6" y="198.9" width="3" height="8.3"/><rect x="1318" y="178" width="3" height="29.2"/></g>
<g fill="none" stroke="#7890aa" stroke-width="1.4"><polyline points="1364.4,195.8 1381.8,201.7 1399.9,182.7 1418.3,188.9"/><circle cx="1364.4" cy="195.8" r="2.4" fill="#fff"/><circle cx="1381.8" cy="201.7" r="2.4" fill="#fff"/><circle cx="1399.9" cy="182.7" r="2.4" fill="#fff"/><circle cx="1418.3" cy="188.9" r="2.4" fill="#fff"/></g>
<g fill="none" stroke="#8da0b5" stroke-width="2"><polyline points="1448.7,175.8 1448.7,207 1492,207"/></g>
<g fill="none" stroke="#8da0b5" stroke-width="1.2"><circle cx="1455" cy="198.6" r="1.9"/><circle cx="1461" cy="192.5" r="1.9"/><circle cx="1468.8" cy="193.8" r="1.9"/><circle cx="1473" cy="187.8" r="1.9"/><circle cx="1479" cy="183" r="1.9"/><circle cx="1485" cy="189.2" r="1.9"/></g>
<g><rect x="1302.2" y="243" width="3.4" height="31" fill="#e9eef3"/><rect x="1308.6" y="243" width="3.4" height="31" fill="#e9eef3"/><rect x="1315.2" y="243" width="3.4" height="31" fill="#e9eef3"/>
<rect x="1302.2" y="255" width="3.4" height="19" fill="#b0bfcf"/><rect x="1308.6" y="253" width="3.4" height="21" fill="#b0bfcf"/><rect x="1315.2" y="258" width="3.4" height="16" fill="#7d91a8"/>
<rect x="1302.2" y="266" width="3.4" height="8" fill="#7d91a8"/><rect x="1308.6" y="262" width="3.4" height="12" fill="#7d91a8"/></g>
<g fill="none" stroke="#8da0b5" stroke-width="2"><polyline points="1369.8,242 1369.8,273 1413.3,273"/></g>
<polyline points="1369.8,262.6 1379.7,255.7 1389,263 1409.5,247.8" fill="none" stroke="#8296ad" stroke-width="1.8"/>
<polyline points="1369.8,273 1392,251 1409.6,266.3" fill="none" stroke="#a9b8c8" stroke-width="1.3"/>
<g fill="none" stroke="#8da0b5" stroke-width="2"><polyline points="1448.7,242 1448.7,273 1492,273"/></g>
<g fill="none" stroke="#8da0b5" stroke-width="1.2"><circle cx="1467" cy="250.8" r="1.9"/><circle cx="1482.1" cy="250.8" r="1.9"/><circle cx="1459.5" cy="256.7" r="1.9"/><circle cx="1467" cy="256.7" r="1.9"/><circle cx="1474.6" cy="256.7" r="1.9"/><circle cx="1482.1" cy="256.7" r="1.9"/><circle cx="1459.5" cy="262.8" r="1.9"/><circle cx="1467" cy="262.8" r="1.9"/><circle cx="1474.6" cy="262.8" r="1.9"/><circle cx="1482.1" cy="262.8" r="1.9"/></g>
<g fill="#a9b8c8"><rect x="1300.5" y="316.5" width="3" height="22.4"/><rect x="1306.9" y="310.2" width="3" height="28.7"/><rect x="1313.7" y="322.4" width="3" height="16.5"/></g>
<polyline points="1295,329.6 1309.4,325 1316,329.6 1327,325" fill="none" stroke="#7f94ab" stroke-width="1.5"/>
<g><rect x="1382.1" y="308.2" width="3.9" height="31.5" fill="#9aacbf"/><rect x="1389.2" y="308.2" width="3.9" height="31.5" fill="#b0bfcf"/><rect x="1395.6" y="308.2" width="3.9" height="31.5" fill="#b0bfcf"/>
<rect x="1382.1" y="319" width="3.9" height="10" fill="#b0bfcf"/><rect x="1382.1" y="333" width="3.9" height="6.7" fill="#8296ad"/><rect x="1389.2" y="328" width="3.9" height="11.7" fill="#8296ad"/><rect x="1395.6" y="323" width="3.9" height="16.7" fill="#8296ad"/></g>
<polyline points="1375.7,326.4 1390,322.5 1397,326.4 1408.3,322.2" fill="none" stroke="#7f94ab" stroke-width="1.5"/>
<polygon points="1456,311 1484,311 1481.5,316.6 1458.5,316.6" fill="#8296ad"/>
<polygon points="1459.8,318.8 1479.5,318.8 1477.5,323.6 1461.8,323.6" fill="#9aacbf"/>
<polygon points="1463.5,326 1475.7,326 1474,330.6 1465.2,330.6" fill="#b0bfcf"/>
<rect x="1468" y="332.7" width="3.5" height="3.9" fill="#c0ccd8"/>
<g transform="translate(1311.3,390.3)"><path d="M0 0 L0 -13.5 A13.5 13.5 0 0 1 13.5 0 Z" fill="#b0bfce"/><path d="M0 0 L13.5 0 A13.5 13.5 0 0 1 -9.5 9.6 Z" fill="#9aacbf"/><path d="M0 0 L-9.5 9.6 A13.5 13.5 0 0 1 0 -13.5 Z" fill="#8296ad"/><g stroke="#fff" stroke-width="1.3"><line x1="0" y1="0" x2="0" y2="-14"/><line x1="0" y1="0" x2="14" y2="0"/><line x1="0" y1="0" x2="-10" y2="10"/></g></g>
<g stroke="#a9b8c8" stroke-width="1.3"><line x1="1380.8" y1="379.9" x2="1380.8" y2="400.4"/><line x1="1391.4" y1="375.1" x2="1391.4" y2="405.5"/><line x1="1401.8" y1="379.9" x2="1401.8" y2="400.4"/></g>
<g fill="#a9b8c8"><circle cx="1380.8" cy="379.9" r="1.8"/><circle cx="1380.8" cy="400.4" r="1.8"/><circle cx="1391.4" cy="375.1" r="1.8"/><circle cx="1391.4" cy="405.5" r="1.8"/><circle cx="1401.8" cy="379.9" r="1.8"/><circle cx="1401.8" cy="400.4" r="1.8"/></g>
<g fill="#8296ad"><circle cx="1380.8" cy="390.1" r="2.9"/><circle cx="1391.4" cy="390.1" r="2.9"/><circle cx="1401.8" cy="390.1" r="2.9"/></g>
<rect x="1452" y="380.2" width="35.5" height="4.5" fill="#8296ad" rx="0.8"/>
<g stroke="#b9c6d3" stroke-width="1.2"><line x1="1452" y1="388.6" x2="1487.5" y2="388.6"/><line x1="1452" y1="392.6" x2="1487.5" y2="392.6"/><line x1="1452" y1="396.8" x2="1487.5" y2="396.8"/><line x1="1461" y1="384.7" x2="1461" y2="400"/><line x1="1470" y1="384.7" x2="1470" y2="400"/><line x1="1479" y1="384.7" x2="1479" y2="400"/></g>
<rect x="1295" y="443" width="32.8" height="3" fill="#8296ad"/>
</svg>
<div class="sb" style="left:1517px;top:153px;width:24px;height:293px"></div>
<div class="sbt" style="left:1518px;top:178px;width:21px;height:150px"></div>
<div class="aru" style="left:1522.5px;top:163px;border-bottom-color:#a3a3a3"></div>
<div class="ard" style="left:1522.5px;top:430px"></div>
<div class="a" style="left:1266px;top:446px;width:275px;height:47px;background:#f4f5f7;border-bottom:1px solid #ebebeb"></div>
<div class="t" style="left:1281px;top:461px;font-size:17.3px;color:#4d4d4d">General</div>
<svg class="a" style="left:1505px;top:462px" width="20" height="12"><path d="M2.5 2.5l7.5 6 7.5-6" fill="none" stroke="#c8c8c8" stroke-width="2.6"/></svg>
<div class="a" style="left:1266px;top:493px;width:275px;height:52px;background:#fff;border-bottom:1px solid #ebebeb"></div>
<div class="a" style="left:1289px;top:508px;width:21px;height:21px;background:#3568c8;border-radius:3px"></div>
<svg class="a" style="left:1289px;top:508px" width="21" height="21"><path d="M4.6 9.6L8.5 14.1L15.6 5.9" fill="none" stroke="#fff" stroke-width="2.1"/></svg>
<div class="t" style="left:1325px;top:509px;font-size:19.5px;color:#4d4d4d">Tooltips</div>
<svg class="a" style="left:1501px;top:510px" width="22" height="14"><path d="M3.5 3.5l7.5 6 7.5-6" fill="none" stroke="#2f5fc0" stroke-width="3"/></svg>
<div class="a" style="left:1266px;top:545px;width:275px;height:366px;background:#f8f8fb"></div>
<div class="t" style="left:1289px;top:560px;font-size:18.4px;color:#3a6ccc">+ Add Column</div>
<div class="t" style="left:1289px;top:663px;font-size:18px;color:#4d4d4d">Header</div>
<div class="a" style="left:1289px;top:695px;width:230px;height:72px;background:#fff;border:1px solid #c6c6c6;border-radius:2px"></div>
<div class="t" style="left:1304.5px;top:708px;font-size:18.4px;color:#c3c3c3">Type text</div>
<div class="a" style="left:1266px;top:782px;width:275px;height:129px;background:#fff"></div>
<div class="t" style="left:1289px;top:797px;font-size:19.4px;color:#c8c8c8">Max Data Points</div>
<div class="a" style="left:1289px;top:851px;width:230px;height:44px;background:#fff;border:1px solid #efefef"></div>
<div class="t" style="left:1305px;top:864px;font-size:17px;color:#c3c3c3">50</div>
<svg class="a" style="left:1492px;top:856px" width="22" height="34"><path d="M3.5 9.5l7.5-6 7.5 6M3.5 24l7.5 6 7.5-6" fill="none" stroke="#b8c8ee" stroke-width="2.4"/></svg>
<div class="a" style="left:1266px;top:911px;width:275px;height:6px;background:#f3f3f5;border-top:1px solid #e6e6e6"></div>
<!-- modal inner scrollbar -->
<div class="sb" style="left:1541px;top:107px;width:25px;height:810px"></div>
<div class="sbt" style="left:1543px;top:132px;width:21px;height:594px"></div>
<div class="aru" style="left:1547.5px;top:117px;border-bottom-color:#a3a3a3"></div>
<div class="ard" style="left:1547.5px;top:901px"></div>
<!-- red highlight -->
<div class="a" style="left:1251px;top:590px;width:304px;height:63px;border:4px solid #ef3a3d;background:#f8f8fb;box-shadow:3px 4px 5px rgba(0,0,0,0.35)"></div>
<svg class="a" style="left:1280px;top:608px" width="18" height="26"><g fill="#c8c8c8"><circle cx="4.5" cy="3.5" r="2.6"/><circle cx="12.5" cy="3.5" r="2.6"/><circle cx="4.5" cy="12.2" r="2.6"/><circle cx="12.5" cy="12.2" r="2.6"/><circle cx="4.5" cy="21" r="2.6"/><circle cx="12.5" cy="21" r="2.6"/></g></svg>
<div class="t" style="left:1309.5px;top:610px;font-size:21px;color:#4d4d4d">Column 1</div>
<svg class="a" style="left:1514px;top:609px" width="16" height="20"><path d="M4.5 3.5l6.5 6.5-6.5 6.5" fill="none" stroke="#2f5fc0" stroke-width="3"/></svg>


<!-- CHART -->
<svg class="a" style="left:332px;top:289px" width="933" height="628" viewBox="332 289 933 628"><line x1="408" y1="769.8" x2="1250" y2="769.8" stroke="#ebebeb" stroke-width="2" stroke-dasharray="7 8" stroke-dashoffset="-14"/><line x1="408" y1="731.0" x2="1250" y2="731.0" stroke="#ebebeb" stroke-width="2" stroke-dasharray="7 8" stroke-dashoffset="-14"/><line x1="408" y1="692.1" x2="1250" y2="692.1" stroke="#ebebeb" stroke-width="2" stroke-dasharray="7 8" stroke-dashoffset="-14"/><line x1="408" y1="653.2" x2="1250" y2="653.2" stroke="#ebebeb" stroke-width="2" stroke-dasharray="7 8" stroke-dashoffset="-14"/><line x1="408" y1="614.2" x2="1250" y2="614.2" stroke="#ebebeb" stroke-width="2" stroke-dasharray="7 8" stroke-dashoffset="-14"/><line x1="408" y1="575.3" x2="1250" y2="575.3" stroke="#ebebeb" stroke-width="2" stroke-dasharray="7 8" stroke-dashoffset="-14"/><line x1="408" y1="536.3" x2="1250" y2="536.3" stroke="#ebebeb" stroke-width="2" stroke-dasharray="7 8" stroke-dashoffset="-14"/><line x1="408" y1="497.3" x2="1250" y2="497.3" stroke="#ebebeb" stroke-width="2" stroke-dasharray="7 8" stroke-dashoffset="-14"/><line x1="408" y1="458.6" x2="1250" y2="458.6" stroke="#ebebeb" stroke-width="2" stroke-dasharray="7 8" stroke-dashoffset="-14"/><line x1="408" y1="419.8" x2="1250" y2="419.8" stroke="#ebebeb" stroke-width="2" stroke-dasharray="7 8" stroke-dashoffset="-14"/><line x1="408" y1="381.1" x2="1250" y2="381.1" stroke="#ebebeb" stroke-width="2" stroke-dasharray="7 8" stroke-dashoffset="-14"/><line x1="408" y1="342.5" x2="1250" y2="342.5" stroke="#ebebeb" stroke-width="2" stroke-dasharray="7 8" stroke-dashoffset="-14"/><rect x="411.8" y="797.4" width="84.2" height="10.1" fill="#5b7690"/><rect x="505.5" y="506.9" width="84.2" height="300.6" fill="#5b7690"/><rect x="599.2" y="403.4" width="84.2" height="404.1" fill="#5b7690"/><rect x="692.9" y="324.7" width="84.2" height="482.8" fill="#5b7690"/><rect x="786.5" y="448.5" width="84.2" height="359.0" fill="#5b7690"/><rect x="880.2" y="505.4" width="84.2" height="302.1" fill="#5b7690"/><rect x="973.9" y="381.6" width="84.2" height="425.9" fill="#5b7690"/><rect x="1067.6" y="556.0" width="84.2" height="251.5" fill="#5b7690"/><rect x="1161.3" y="741.3" width="84.2" height="66.2" fill="#5b7690"/><line x1="405" y1="809" x2="1250" y2="809" stroke="#e3e3e3" stroke-width="1.6"/><rect x="405.2" y="325" width="3" height="493" fill="#e1e1e1"/><rect x="398" y="325" width="10" height="2.5" fill="#e1e1e1"/><rect x="398" y="807.0" width="8" height="3" fill="#e1e1e1"/><rect x="398" y="729.5" width="8" height="3" fill="#e1e1e1"/><rect x="398" y="651.7" width="8" height="3" fill="#e1e1e1"/><rect x="398" y="573.8" width="8" height="3" fill="#e1e1e1"/><rect x="398" y="495.8" width="8" height="3" fill="#e1e1e1"/><rect x="398" y="418.3" width="8" height="3" fill="#e1e1e1"/><rect x="398" y="341.0" width="8" height="3" fill="#e1e1e1"/><rect x="452.5" y="809" width="2.8" height="9" fill="#e1e1e1"/><rect x="546.2" y="809" width="2.8" height="9" fill="#e1e1e1"/><rect x="639.9" y="809" width="2.8" height="9" fill="#e1e1e1"/><rect x="733.6" y="809" width="2.8" height="9" fill="#e1e1e1"/><rect x="827.2" y="809" width="2.8" height="9" fill="#e1e1e1"/><rect x="920.9" y="809" width="2.8" height="9" fill="#e1e1e1"/><rect x="1014.6" y="809" width="2.8" height="9" fill="#e1e1e1"/><rect x="1108.3" y="809" width="2.8" height="9" fill="#e1e1e1"/><rect x="1202.0" y="809" width="2.8" height="9" fill="#e1e1e1"/><rect x="1247.5" y="809" width="2.5" height="9" fill="#e1e1e1"/><text x="392.5" y="808.5" text-anchor="end" font-size="17.5" fill="#555" font-family="Liberation Sans">0</text><text x="392.5" y="731.0" text-anchor="end" font-size="17.5" fill="#555" font-family="Liberation Sans">100</text><text x="392.5" y="653.2" text-anchor="end" font-size="17.5" fill="#555" font-family="Liberation Sans">200</text><text x="392.5" y="575.3" text-anchor="end" font-size="17.5" fill="#555" font-family="Liberation Sans">300</text><text x="392.5" y="497.3" text-anchor="end" font-size="17.5" fill="#555" font-family="Liberation Sans">400</text><text x="392.5" y="419.8" text-anchor="end" font-size="17.5" fill="#555" font-family="Liberation Sans">500</text><text x="392.5" y="342.5" text-anchor="end" font-size="17.5" fill="#555" font-family="Liberation Sans">600</text><text x="453.9" y="794.3" text-anchor="middle" font-size="14.5" fill="#2b5573" font-family="Liberation Sans">13</text><text x="547.6" y="503.8" text-anchor="middle" font-size="14.5" fill="#2b5573" font-family="Liberation Sans">386</text><text x="641.3" y="400.3" text-anchor="middle" font-size="14.5" fill="#2b5573" font-family="Liberation Sans">519</text><text x="735.0" y="321.6" text-anchor="middle" font-size="14.5" fill="#2b5573" font-family="Liberation Sans">620</text><text x="828.6" y="445.4" text-anchor="middle" font-size="14.5" fill="#2b5573" font-family="Liberation Sans">461</text><text x="922.3" y="502.3" text-anchor="middle" font-size="14.5" fill="#2b5573" font-family="Liberation Sans">388</text><text x="1016.0" y="378.5" text-anchor="middle" font-size="14.5" fill="#2b5573" font-family="Liberation Sans">547</text><text x="1109.7" y="552.9" text-anchor="middle" font-size="14.5" fill="#2b5573" font-family="Liberation Sans">323</text><text x="1203.4" y="738.2" text-anchor="middle" font-size="14.5" fill="#2b5573" font-family="Liberation Sans">85</text><text transform="translate(453.9,829.5) rotate(-45)" text-anchor="end" font-size="16.8" fill="#444" font-family="Liberation Sans">Apr 2022</text><text transform="translate(547.6,829.5) rotate(-45)" text-anchor="end" font-size="16.8" fill="#444" font-family="Liberation Sans">Jun 2022</text><text transform="translate(641.3,829.5) rotate(-45)" text-anchor="end" font-size="16.8" fill="#444" font-family="Liberation Sans">Jul 2022</text><text transform="translate(735.0,829.5) rotate(-45)" text-anchor="end" font-size="16.8" fill="#444" font-family="Liberation Sans">Aug 2022</text><text transform="translate(828.6,829.5) rotate(-45)" text-anchor="end" font-size="16.8" fill="#444" font-family="Liberation Sans">Sep 2022</text><text transform="translate(922.3,829.5) rotate(-45)" text-anchor="end" font-size="16.8" fill="#444" font-family="Liberation Sans">Oct 2022</text><text transform="translate(1016.0,829.5) rotate(-45)" text-anchor="end" font-size="16.8" fill="#444" font-family="Liberation Sans">Nov 2022</text><text transform="translate(1109.7,829.5) rotate(-45)" text-anchor="end" font-size="16.8" fill="#444" font-family="Liberation Sans">Dec 2022</text><text transform="translate(1203.4,829.5) rotate(-45)" text-anchor="end" font-size="16.8" fill="#444" font-family="Liberation Sans">Jan 2023</text></svg>


<!-- black frame -->
<div class="a" style="left:0;top:0;width:1623px;height:2px;background:#000"></div>
<div class="a" style="left:0;top:0;width:2px;height:949px;background:#000"></div>
<div class="a" style="left:0;top:946px;width:1623px;height:3px;background:#000"></div>
<div class="a" style="left:1621px;top:0;width:2px;height:949px;background:#000"></div>
</body></html>
